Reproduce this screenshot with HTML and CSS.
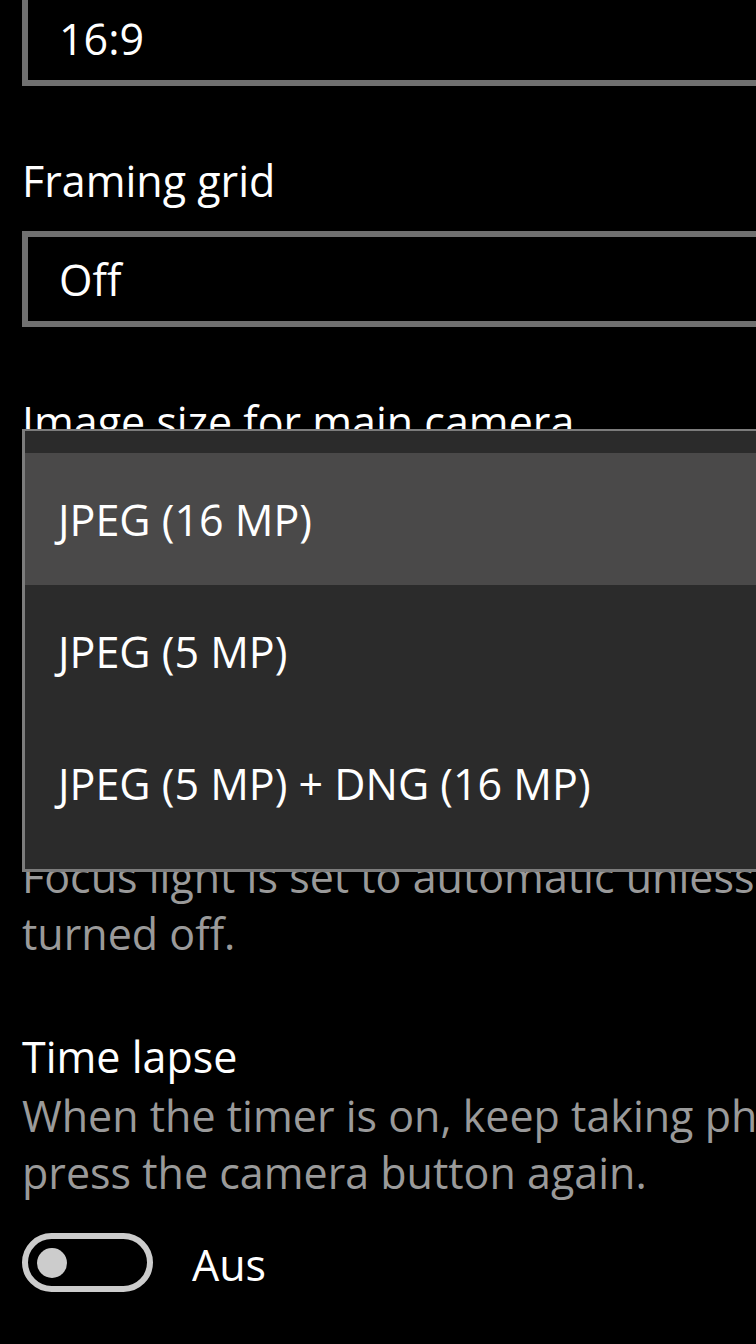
FILE: index.html
```html
<!DOCTYPE html>
<html lang="en">

<head>
    <meta charset="UTF-8">
    <title>Camera settings</title>
    <link rel="stylesheet" href="styles.css">
</head>

<body>
    <div class="page">
        <!-- aspect ratio, label scrolled off the top -->
        <div class="combo first"><span class="combotext">16:9</span></div>

        <div class="setting">
            <div class="label">Framing grid</div>
            <div class="combo"><span class="combotext">Off</span></div>
        </div>

        <div class="setting">
            <div class="label">Image size for main camera</div>
            <div class="combo"><span class="combotext">JPEG (16 MP)</span></div>
        </div>

        <div class="setting">
            <div class="label">Focus light</div>
            <div class="combo"><span class="combotext">Auto</span></div>
            <div class="desc">Focus light is set to automatic unless flash is<br>turned off.</div>
        </div>

        <div class="setting">
            <div class="label">Time lapse</div>
            <div class="desc">When the timer is on, keep taking photos until you<br>press the camera button again.</div>
            <div class="togglerow">
                <span class="toggle"><span class="knob"></span></span>
                <span class="toggletext">Aus</span>
            </div>
        </div>

        <!-- open list of the image size box -->
        <div class="popup">
            <div class="item selected">JPEG (16 MP)</div>
            <div class="item">JPEG (5 MP)</div>
            <div class="item">JPEG (5 MP) + DNG (16 MP)</div>
        </div>
    </div>
</body>

</html>
```

FILE: styles.css
```css
html,
body {
    margin: 0;
    background: #000;
    overflow: hidden;
}

body {
    font-family: "Open Sans", "Noto Sans", sans-serif;
    font-size: 43px;
    line-height: 57px;
    color: #fff;
}

.page {
    display: flow-root;
    position: relative;
    padding-left: 22px;
    height: 1344px;
}

.combo {
    box-sizing: border-box;
    height: 96px;
    margin-right: -60px;
    border: 6px solid #707070;
    padding-left: 31px;
    display: flex;
    align-items: center;
}

.first {
    margin-top: -10px;
}

.setting {
    margin-top: 66px;
}

.label {
    margin-bottom: 22px;
}

.desc {
    color: #9a9a9a;
    white-space: nowrap;
}

/* label straight over the description text */
.label + .desc {
    margin-top: -20px;
}

.combo + .desc {
    margin-top: 39px;
}

.togglerow {
    margin-top: 32px;
    display: flex;
    align-items: flex-start;
}

.toggle {
    box-sizing: border-box;
    width: 131px;
    height: 59px;
    border: 6px solid #cccccc;
    border-radius: 30px;
    padding-left: 9px;
    display: flex;
    align-items: center;
}

.knob {
    width: 30px;
    height: 30px;
    border-radius: 50%;
    background: #cccccc;
}

.toggletext {
    margin-left: 39px;
    margin-top: 3px;
}

.popup {
    position: absolute;
    top: 429px;
    left: 22px;
    right: -60px;
    border: 3px solid #7c7c7c;
    border-top-width: 2px;
    background: #2b2b2b;
    padding: 22px 0 20px;
}

.item {
    height: 132px;
    padding-left: 33px;
    display: flex;
    align-items: center;
}

.selected {
    background: #4a4949;
}
```
